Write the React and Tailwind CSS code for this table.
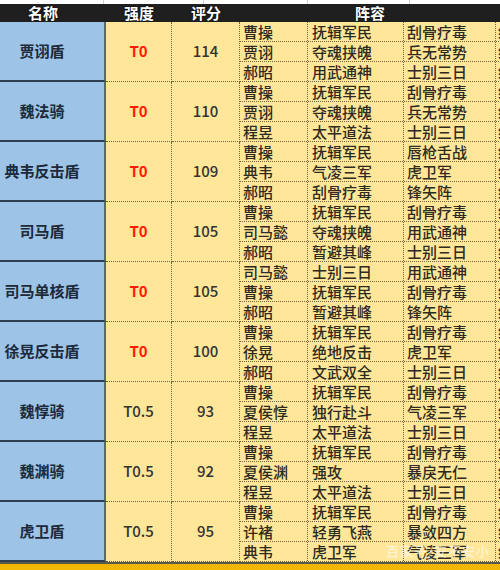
import React from "react";

const groups = [
  { name: "贾诩盾", tier: "T0", score: "114", rows: [["曹操", "抚辑军民", "刮骨疗毒", "统"], ["贾诩", "夺魂挟魄", "兵无常势", "统"], ["郝昭", "用武通神", "士别三日", "统"]] },
  { name: "魏法骑", tier: "T0", score: "110", rows: [["曹操", "抚辑军民", "刮骨疗毒", "统"], ["贾诩", "夺魂挟魄", "兵无常势", "统"], ["程昱", "太平道法", "士别三日", "统"]] },
  { name: "典韦反击盾", tier: "T0", score: "109", rows: [["曹操", "抚辑军民", "唇枪舌战", "统"], ["典韦", "气凌三军", "虎卫军", "统"], ["郝昭", "刮骨疗毒", "锋矢阵", "统"]] },
  { name: "司马盾", tier: "T0", score: "105", rows: [["曹操", "抚辑军民", "刮骨疗毒", "统"], ["司马懿", "夺魂挟魄", "用武通神", "统"], ["郝昭", "暂避其峰", "士别三日", "统"]] },
  { name: "司马单核盾", tier: "T0", score: "105", rows: [["司马懿", "士别三日", "用武通神", "统"], ["曹操", "抚辑军民", "刮骨疗毒", "统"], ["郝昭", "暂避其峰", "锋矢阵", "统"]] },
  { name: "徐晃反击盾", tier: "T0", score: "100", rows: [["曹操", "抚辑军民", "刮骨疗毒", "统"], ["徐晃", "绝地反击", "虎卫军", "统"], ["郝昭", "文武双全", "士别三日", "统"]] },
  { name: "魏惇骑", tier: "T0.5", score: "93", rows: [["曹操", "抚辑军民", "刮骨疗毒", "统"], ["夏侯惇", "独行赴斗", "气凌三军", "统"], ["程昱", "太平道法", "士别三日", "统"]] },
  { name: "魏渊骑", tier: "T0.5", score: "92", rows: [["曹操", "抚辑军民", "刮骨疗毒", "统"], ["夏侯渊", "强攻", "暴戾无仁", "统"], ["程昱", "太平道法", "士别三日", "统"]] },
  { name: "虎卫盾", tier: "T0.5", score: "95", rows: [["曹操", "抚辑军民", "刮骨疗毒", "统"], ["许褚", "轻勇飞燕", "暴敛四方", "统"], ["典韦", "虎卫军", "气凌三军", "统"]] },
];

const font = { fontFamily: '"Noto Sans CJK SC", "Noto Sans", sans-serif' };

export default function App() {
  return (
    <div className="relative w-[500px] h-[570px] overflow-hidden bg-white" style={font}>
      {/* top strip of previous spreadsheet row */}
      <div className="flex h-[4px] bg-white">
        <div className="w-[104px] border-r border-[#cfcfcf]" />
        <div className="w-[100px] border-r border-[#cfcfcf]" />
        <div className="w-[104px] border-r border-[#cfcfcf]" />
        <div className="w-[102px] border-r border-[#cfcfcf]" />
        <div className="flex-1" />
      </div>
      {/* header */}
      <div className="flex h-[18px] bg-[#1f1f1f] text-white text-[15px] font-bold leading-[18px] [text-shadow:0_0_2px_#000]">
        <div className="w-[106px] shrink-0 pr-[20px] text-center">名称</div>
        <div className="w-[66px] shrink-0 text-center">强度</div>
        <div className="w-[68px] shrink-0 text-center">评分</div>
        <div className="flex-1 text-center">阵容</div>
      </div>
      {/* groups */}
      {groups.map((g, i) => (
        <div key={i} className="flex h-[60px]">
          <div className="w-[106px] shrink-0 bg-[#9dc3e6] border-r-2 border-r-[#5b6774] border-b-2 border-b-[#2e3f52] flex items-center justify-center pr-[20px] text-[15px] font-bold text-[#1c2a3a]">
            {g.name}
          </div>
          <div className={`w-[66px] shrink-0 bg-[#ffe699] border-r border-dotted border-[#6e6440] border-b flex items-center justify-center text-[15px] ${g.tier === "T0" ? "text-[#ff1a0a] font-bold" : "text-[#333333] font-medium"}`}>
            {g.tier}
          </div>
          <div className="w-[68px] shrink-0 bg-[#ffe699] border-r border-dotted border-[#6e6440] border-b flex items-center justify-center text-[15px] font-medium text-[#333333]">
            {g.score}
          </div>
          <div className="flex-1 bg-[#ffe699] flex flex-col">
            {g.rows.map((r, j) => (
              <div key={j} className="flex h-[20px] border-b border-dotted border-[#6e6440] text-[15px] leading-[19px] text-[#2e2a20] font-medium whitespace-nowrap">
                <div className="w-[68px] shrink-0 pl-[3px] border-r border-dotted border-[#6e6440] overflow-hidden">{r[0]}</div>
                <div className="w-[96px] shrink-0 pl-[4px] border-r border-dotted border-[#6e6440] overflow-hidden">{r[1]}</div>
                <div className="w-[92px] shrink-0 pl-[3px] border-r border-dotted border-[#6e6440] overflow-hidden">{r[2]}</div>
                <div className="flex-1 pl-[2px] overflow-hidden">{r[3]}</div>
              </div>
            ))}
          </div>
        </div>
      ))}
      {/* bottom strip */}
      <div className="h-[8px] border-t-2 border-[#5a5a4a] bg-[#f2b705]" />
      {/* watermark */}
      <div className="absolute left-[386px] top-[541px] text-[13px] text-white/70 whitespace-nowrap tracking-[1px]">
        百家号/安不安小
      </div>
    </div>
  );
}
